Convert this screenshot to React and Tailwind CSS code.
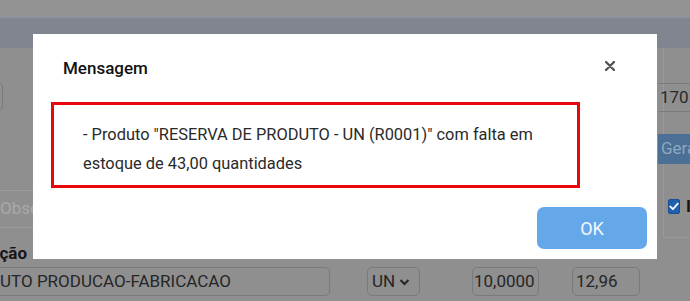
import React from "react";

function Field({ className = "", children }) {
  return (
    <div
      className={
        "h-[29px] flex items-center border border-[#777a7e] rounded-[5px] text-[17px] text-[#262626] whitespace-nowrap overflow-hidden " +
        className
      }
    >
      {children}
    </div>
  );
}

export default function App() {
  return (
    <div className="relative w-[690px] h-[301px] overflow-hidden bg-[#8f8f8f] font-['Roboto',sans-serif]">
      {/* background page */}
      <div className="h-[17px] bg-[#939393]" />
      <div className="h-[31px] bg-[#81858f] border-t border-[#8b90a0]" />

      <div className="flex justify-between h-[192px]">
        {/* left column */}
        <div className="w-[40px] flex flex-col">
          <div className="mt-[34px] ml-[-20px] w-[23px] h-[29px] border border-[#777a7e] rounded-[5px]" />
          <div className="mt-[79px] h-[38px] border-t border-b border-[#9c9c9c] flex items-center text-[17px] text-[#a9a9a9] whitespace-nowrap overflow-hidden">
            Obse
          </div>
        </div>
        {/* right column */}
        <div className="w-[33px] flex flex-col relative">
          <div className="ml-[6px] h-[190px] border-l border-b border-[#9a9a9a] flex flex-col">
            <div className="mt-[35px] ml-[-6px] h-[29px] border-t border-b border-[#7a7a7a] flex items-center pl-[2px] text-[17px] text-[#2a2a2a] whitespace-nowrap">
              170
            </div>
            <div className="mt-[22px] ml-[-6px] h-[30px] bg-[#4b6f95] flex items-center pl-[3px] text-[17px] text-[#8ea7c2] whitespace-nowrap overflow-hidden">
              Gera
            </div>
            <div className="mt-[34px] ml-[4px] flex items-center gap-[6px]">
              <div className="w-[14px] h-[15px] rounded-[2px] bg-[#1f5fae] border border-[#1a4f92] flex items-center justify-center">
                <svg width="10" height="9" viewBox="0 0 10 9">
                  <path d="M1.3 4.6 L3.9 7.2 L8.8 1.6" fill="none" stroke="#eef3fa" strokeWidth="1.9" strokeLinecap="round" strokeLinejoin="round" />
                </svg>
              </div>
              <span className="text-[17px] font-bold text-[#161616] leading-none">I</span>
            </div>
          </div>
        </div>
      </div>

      <div className="h-[27px] flex items-center">
        <div className="w-[27px] flex justify-end">
          <span className="shrink-0 whitespace-nowrap text-[17px] font-bold text-[#161616]">Descrição</span>
        </div>
      </div>

      <div className="flex items-center">
        <Field className="ml-[-52px] w-[382px] pl-[7px]">PRODUTO PRODUCAO-FABRICACAO</Field>
        <Field className="ml-[37px] w-[53px] pl-[4px] gap-[4px]">
          <span>UN</span>
          <svg width="11" height="8" viewBox="0 0 11 8">
            <path d="M1.5 2 L5.5 6 L9.5 2" fill="none" stroke="#262626" strokeWidth="2" />
          </svg>
        </Field>
        <Field className="ml-[52px] w-[67px] pl-[1px]">10,0000</Field>
        <Field className="ml-[33px] w-[68px] pl-[3px]">12,96</Field>
      </div>

      {/* modal overlay */}
      <div className="absolute inset-0 flex justify-center items-start pt-[34px]">
        <div className="w-[624px] h-[225px] bg-white flex flex-col">
          <div className="flex items-center justify-between pt-[24px] pl-[30px] pr-[42px]">
            <span className="text-[17px] leading-[20px] font-medium text-[#111]">Mensagem</span>
            <svg width="10" height="10" viewBox="0 0 10 10" className="mt-[-4px]">
              <path d="M1 1 L9 9 M9 1 L1 9" stroke="#555" strokeWidth="2.4" strokeLinecap="round" />
            </svg>
          </div>
          <div className="mt-[24px] ml-[18px] w-[529px] border-[3px] border-[#e8070c] pt-[15px] pb-[7px] pl-[29px] pr-[6px] text-[16.4px] leading-[29px] text-[#2a2a2a]">
            - Produto "RESERVA DE PRODUTO - UN (R0001)" com falta em estoque de 43,00 quantidades
          </div>
          <div className="flex justify-end mt-[19px] pr-[10px]">
            <button className="w-[110px] h-[42px] rounded-[7px] bg-[#64a8ea] text-[18px] text-[#f2f7fd]">
              OK
            </button>
          </div>
        </div>
      </div>
    </div>
  );
}
